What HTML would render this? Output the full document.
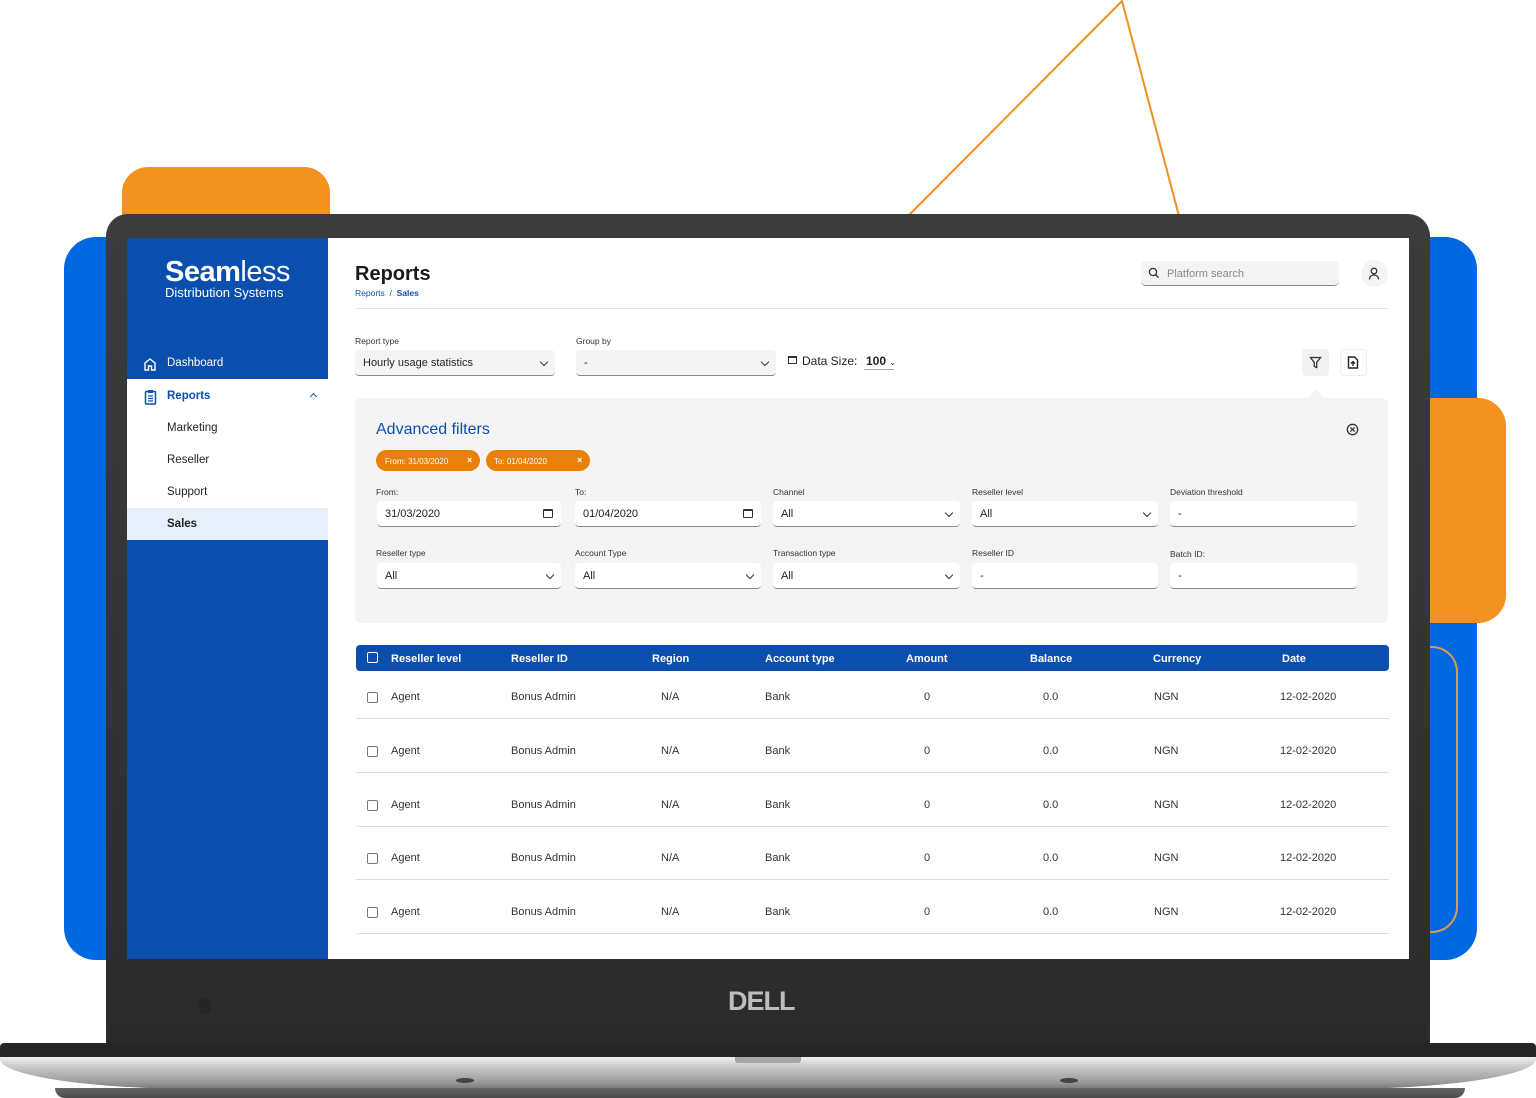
<!DOCTYPE html>
<html><head><meta charset="utf-8">
<style>
*{box-sizing:border-box;margin:0;padding:0}
body{width:1536px;height:1098px;position:relative;overflow:hidden;background:#fff;font-family:"Liberation Sans","DejaVu Sans",sans-serif;color:#222}
.a{position:absolute}
.t{position:absolute;white-space:nowrap}
.lbl{font-size:8.5px;color:#333}
.inp{position:absolute;background:#fff;border-radius:4px;border-bottom:1.5px solid #8a8a8a;height:26px;font-size:11px;color:#222;padding:7px 8px}
.chev{position:absolute;right:8px;top:9px;width:6px;height:6px;border-right:1.5px solid #333;border-bottom:1.5px solid #333;transform:rotate(45deg)}
.cal{position:absolute;right:8px;top:8px;width:10px;height:9px;border:1.3px solid #333;border-top-width:2.5px;border-radius:1px}
.th{font-size:11px;font-weight:bold;color:#fff;top:653px}
.row{position:absolute;left:356px;width:1033px;height:54px;border-bottom:1px solid #ddd;font-size:11px;color:#333}
.row span{position:absolute;top:26px;white-space:nowrap}
.cb{position:absolute;width:11px;height:11px;border:1.3px solid #777;border-radius:2px}
</style></head><body>
<svg class="a" style="left:0;top:0" width="1536" height="240"><polyline points="908,216 1122,1 1179,216" fill="none" stroke="#f0901e" stroke-width="2"/></svg>
<div class="a" style="left:122px;top:167px;width:208px;height:80px;background:#f39221;border-radius:26px 26px 0 0"></div>
<div class="a" style="left:64px;top:237px;width:1413px;height:723px;background:#0068e0;border-radius:32px"></div>
<div class="a" style="left:1400px;top:398px;width:106px;height:225px;background:#f39221;border-radius:0 28px 28px 0"></div>
<div class="a" style="left:1400px;top:646px;width:58px;height:287px;border:2px solid #d99b4e;border-radius:0 26px 26px 0;border-left:none"></div>
<div class="a" style="left:106px;top:214px;width:1324px;height:836px;background:linear-gradient(#3c3c3c,#333 60%,#2a2a2a);border-radius:22px 22px 4px 4px"></div>
<div class="a" style="left:199px;top:998px;width:12px;height:16px;border-radius:50%;background:#252525"></div>
<div class="t" style="left:728px;top:986px;font-size:27px;font-weight:bold;color:#bdbdbd;letter-spacing:-1px">DELL</div>
<div class="a" style="left:0;top:1043px;width:1536px;height:16px;background:#262626;border-radius:4px 4px 0 0"></div>
<div class="a" style="left:0;top:1057px;width:1536px;height:32px;background:linear-gradient(#f0f0f0,#c4c4c4 35%,#999 80%,#777);border-radius:0 0 200px 200px/0 0 30px 30px"></div>
<div class="a" style="left:55px;top:1088px;width:1410px;height:10px;background:linear-gradient(#666,#4a4a4a);border-radius:0 0 12px 12px"></div>
<div class="a" style="left:735px;top:1057px;width:66px;height:6px;background:#a5a5a5;border-radius:0 0 3px 3px"></div>
<div class="a" style="left:456px;top:1078px;width:18px;height:5px;border-radius:50%;background:#444"></div>
<div class="a" style="left:1060px;top:1078px;width:18px;height:5px;border-radius:50%;background:#444"></div>
<div class="a" style="left:127px;top:238px;width:1282px;height:721px;background:#fff"></div>
<div class="a" style="left:127px;top:238px;width:201px;height:721px;background:#0a4fad"></div>
<div class="t" style="left:165px;top:256px;font-size:29px;color:#fff;letter-spacing:-0.5px"><b>Seam</b><span style="font-weight:normal">less</span></div>
<div class="t" style="left:165px;top:285px;font-size:13px;color:#fff">Distribution Systems</div>
<svg class="a" style="left:143px;top:357px" width="14" height="14" viewBox="0 0 14 14"><path d="M2 13V6l5-4 5 4v7H8.5V9h-3v4z" fill="none" stroke="#fff" stroke-width="1.4"/></svg>
<div class="t" style="left:167px;top:357px;font-size:11.5px;color:#fff">Dashboard</div>
<div class="a" style="left:127px;top:379px;width:201px;height:161px;background:#fff"></div>
<div class="a" style="left:127px;top:508px;width:201px;height:32px;background:#e6effa"></div>
<svg class="a" style="left:144px;top:389px" width="13" height="16" viewBox="0 0 13 16"><rect x="1.5" y="2.5" width="10" height="12.5" rx="1" fill="none" stroke="#0a4fad" stroke-width="1.5"/><rect x="4" y="1" width="5" height="3" fill="#0a4fad"/><path d="M4 7h5M4 9.5h5M4 12h5" stroke="#0a4fad" stroke-width="1.2"/></svg>
<div class="t" style="left:167px;top:390px;font-size:11.5px;font-weight:bold;color:#0a4fad">Reports</div>
<div class="a" style="left:311px;top:394px;width:5px;height:5px;border-left:1.5px solid #0a4fad;border-top:1.5px solid #0a4fad;transform:rotate(45deg)"></div>
<div class="t" style="left:167px;top:422px;font-size:11.5px">Marketing</div>
<div class="t" style="left:167px;top:454px;font-size:11.5px">Reseller</div>
<div class="t" style="left:167px;top:486px;font-size:11.5px">Support</div>
<div class="t" style="left:167px;top:518px;font-size:11.5px;font-weight:bold">Sales</div>
<div class="t" style="left:355px;top:263px;font-size:20px;font-weight:bold;color:#1a1a1a">Reports</div>
<div class="t" style="left:355px;top:288px;font-size:8.5px;color:#0a4fad">Reports &nbsp;/ &nbsp;<b>Sales</b></div>
<div class="a" style="left:355px;top:308px;width:1033px;height:1px;background:#e2e2e2"></div>
<div class="a" style="left:1141px;top:261px;width:198px;height:25px;background:#f4f4f4;border-radius:5px;border-bottom:1.5px solid #888"></div>
<svg class="a" style="left:1148px;top:267px" width="12" height="12" viewBox="0 0 12 12"><circle cx="5" cy="5" r="3.6" fill="none" stroke="#333" stroke-width="1.3"/><path d="M7.6 7.6l3 3" stroke="#333" stroke-width="1.4"/></svg>
<div class="t" style="left:1167px;top:268px;font-size:11px;color:#888">Platform search</div>
<div class="a" style="left:1361px;top:260px;width:27px;height:27px;border-radius:50%;background:#f4f4f4"></div>
<svg class="a" style="left:1368px;top:267px" width="12" height="13" viewBox="0 0 12 13"><circle cx="6" cy="4" r="2.8" fill="none" stroke="#333" stroke-width="1.3"/><path d="M1.5 12.5c0-3 2-4.5 4.5-4.5s4.5 1.5 4.5 4.5" fill="none" stroke="#333" stroke-width="1.3"/></svg>
<div class="t lbl" style="left:355px;top:336px">Report type</div>
<div class="inp" style="left:355px;top:350px;width:200px;background:#f4f4f4">Hourly usage statistics<div class="chev"></div></div>
<div class="t lbl" style="left:576px;top:336px">Group by</div>
<div class="inp" style="left:576px;top:350px;width:200px;background:#f4f4f4">-<div class="chev"></div></div>
<div class="a" style="left:788px;top:356px;width:9px;height:8px;border:1.2px solid #333;border-top-width:2.2px"></div>
<div class="t" style="left:802px;top:354px;font-size:12px">Data Size:</div>
<div class="t" style="left:866px;top:354px;font-size:12px;font-weight:bold">100 <span style="font-weight:normal;font-size:8px">⌄</span></div>
<div class="a" style="left:864px;top:369px;width:30px;height:1px;background:#aaa"></div>
<div class="a" style="left:1302px;top:349px;width:27px;height:27px;border-radius:4px;background:#f2f2f2"></div>
<svg class="a" style="left:1309px;top:356px" width="13" height="13" viewBox="0 0 13 13"><path d="M1.5 1.5h10l-3.8 5v5l-2.4-1V6.5z" fill="none" stroke="#333" stroke-width="1.3"/></svg>
<div class="a" style="left:1340px;top:349px;width:27px;height:27px;border-radius:4px;background:#fff;border:1px solid #eee"></div>
<svg class="a" style="left:1347px;top:356px" width="12" height="13" viewBox="0 0 12 13"><path d="M1.5 1h6l3 3v8h-9z" fill="none" stroke="#222" stroke-width="1.4"/><path d="M6 10V5.5M4 7.5l2-2 2 2" fill="none" stroke="#222" stroke-width="1.3"/></svg>
<div class="a" style="left:1310px;top:392px;width:12px;height:12px;background:#f4f4f4;transform:rotate(45deg)"></div>
<div class="a" style="left:355px;top:398px;width:1033px;height:225px;background:#f4f4f4;border-radius:6px"></div>
<div class="t" style="left:376px;top:421px;font-size:16px;color:#0a4fad">Advanced filters</div>
<svg class="a" style="left:1346px;top:423px" width="13" height="13" viewBox="0 0 13 13"><circle cx="6.5" cy="6.5" r="5.2" fill="none" stroke="#333" stroke-width="1.3"/><path d="M4.4 4.4l4.2 4.2M8.6 4.4l-4.2 4.2" stroke="#333" stroke-width="1.3"/></svg>
<div class="a" style="left:376px;top:450px;width:104px;height:21px;border-radius:11px;background:#e98009"></div>
<div class="t" style="left:385px;top:457px;font-size:8px;color:#fff">From: 31/03/2020</div>
<div class="t" style="left:467px;top:455px;font-size:9px;color:#fff;font-weight:bold">×</div>
<div class="a" style="left:486px;top:450px;width:104px;height:21px;border-radius:11px;background:#e98009"></div>
<div class="t" style="left:494px;top:457px;font-size:8px;color:#fff">To: 01/04/2020</div>
<div class="t" style="left:577px;top:455px;font-size:9px;color:#fff;font-weight:bold">×</div>
<div class="t lbl" style="left:376px;top:487px">From:</div>
<div class="inp" style="left:377px;top:501px;width:184px">31/03/2020<div class="cal"></div></div>
<div class="t lbl" style="left:575px;top:487px">To:</div>
<div class="inp" style="left:575px;top:501px;width:186px">01/04/2020<div class="cal"></div></div>
<div class="t lbl" style="left:773px;top:487px">Channel</div>
<div class="inp" style="left:773px;top:501px;width:187px">All<div class="chev"></div></div>
<div class="t lbl" style="left:972px;top:487px">Reseller level</div>
<div class="inp" style="left:972px;top:501px;width:186px">All<div class="chev"></div></div>
<div class="t lbl" style="left:1170px;top:487px">Deviation threshold</div>
<div class="inp" style="left:1170px;top:501px;width:187px">-</div>
<div class="t lbl" style="left:376px;top:548px">Reseller type</div>
<div class="inp" style="left:377px;top:563px;width:184px">All<div class="chev"></div></div>
<div class="t lbl" style="left:575px;top:548px">Account Type</div>
<div class="inp" style="left:575px;top:563px;width:186px">All<div class="chev"></div></div>
<div class="t lbl" style="left:773px;top:548px">Transaction type</div>
<div class="inp" style="left:773px;top:563px;width:187px">All<div class="chev"></div></div>
<div class="t lbl" style="left:972px;top:548px">Reseller ID</div>
<div class="inp" style="left:972px;top:563px;width:186px">-</div>
<div class="t lbl" style="left:1170px;top:549px">Batch ID:</div>
<div class="inp" style="left:1170px;top:563px;width:187px">-</div>
<div class="a" style="left:356px;top:645px;width:1033px;height:26px;background:#0a4fad;border-radius:4px"></div>
<div class="cb" style="left:367px;top:652px;border-color:#fff"></div>
<div class="t th" style="left:391px">Reseller level</div>
<div class="t th" style="left:511px">Reseller ID</div>
<div class="t th" style="left:652px">Region</div>
<div class="t th" style="left:765px">Account type</div>
<div class="t th" style="left:906px">Amount</div>
<div class="t th" style="left:1030px">Balance</div>
<div class="t th" style="left:1153px">Currency</div>
<div class="t th" style="left:1282px">Date</div>
<div class="row" style="top:665px"><div class="cb" style="left:11px;top:27px"></div><span style="left:35px">Agent</span><span style="left:155px">Bonus Admin</span><span style="left:305px">N/A</span><span style="left:409px">Bank</span><span style="left:568px">0</span><span style="left:687px">0.0</span><span style="left:798px">NGN</span><span style="left:924px">12-02-2020</span></div>
<div class="row" style="top:719px"><div class="cb" style="left:11px;top:27px"></div><span style="left:35px">Agent</span><span style="left:155px">Bonus Admin</span><span style="left:305px">N/A</span><span style="left:409px">Bank</span><span style="left:568px">0</span><span style="left:687px">0.0</span><span style="left:798px">NGN</span><span style="left:924px">12-02-2020</span></div>
<div class="row" style="top:773px"><div class="cb" style="left:11px;top:27px"></div><span style="left:35px">Agent</span><span style="left:155px">Bonus Admin</span><span style="left:305px">N/A</span><span style="left:409px">Bank</span><span style="left:568px">0</span><span style="left:687px">0.0</span><span style="left:798px">NGN</span><span style="left:924px">12-02-2020</span></div>
<div class="row" style="top:826px"><div class="cb" style="left:11px;top:27px"></div><span style="left:35px">Agent</span><span style="left:155px">Bonus Admin</span><span style="left:305px">N/A</span><span style="left:409px">Bank</span><span style="left:568px">0</span><span style="left:687px">0.0</span><span style="left:798px">NGN</span><span style="left:924px">12-02-2020</span></div>
<div class="row" style="top:880px"><div class="cb" style="left:11px;top:27px"></div><span style="left:35px">Agent</span><span style="left:155px">Bonus Admin</span><span style="left:305px">N/A</span><span style="left:409px">Bank</span><span style="left:568px">0</span><span style="left:687px">0.0</span><span style="left:798px">NGN</span><span style="left:924px">12-02-2020</span></div>
</body></html>
